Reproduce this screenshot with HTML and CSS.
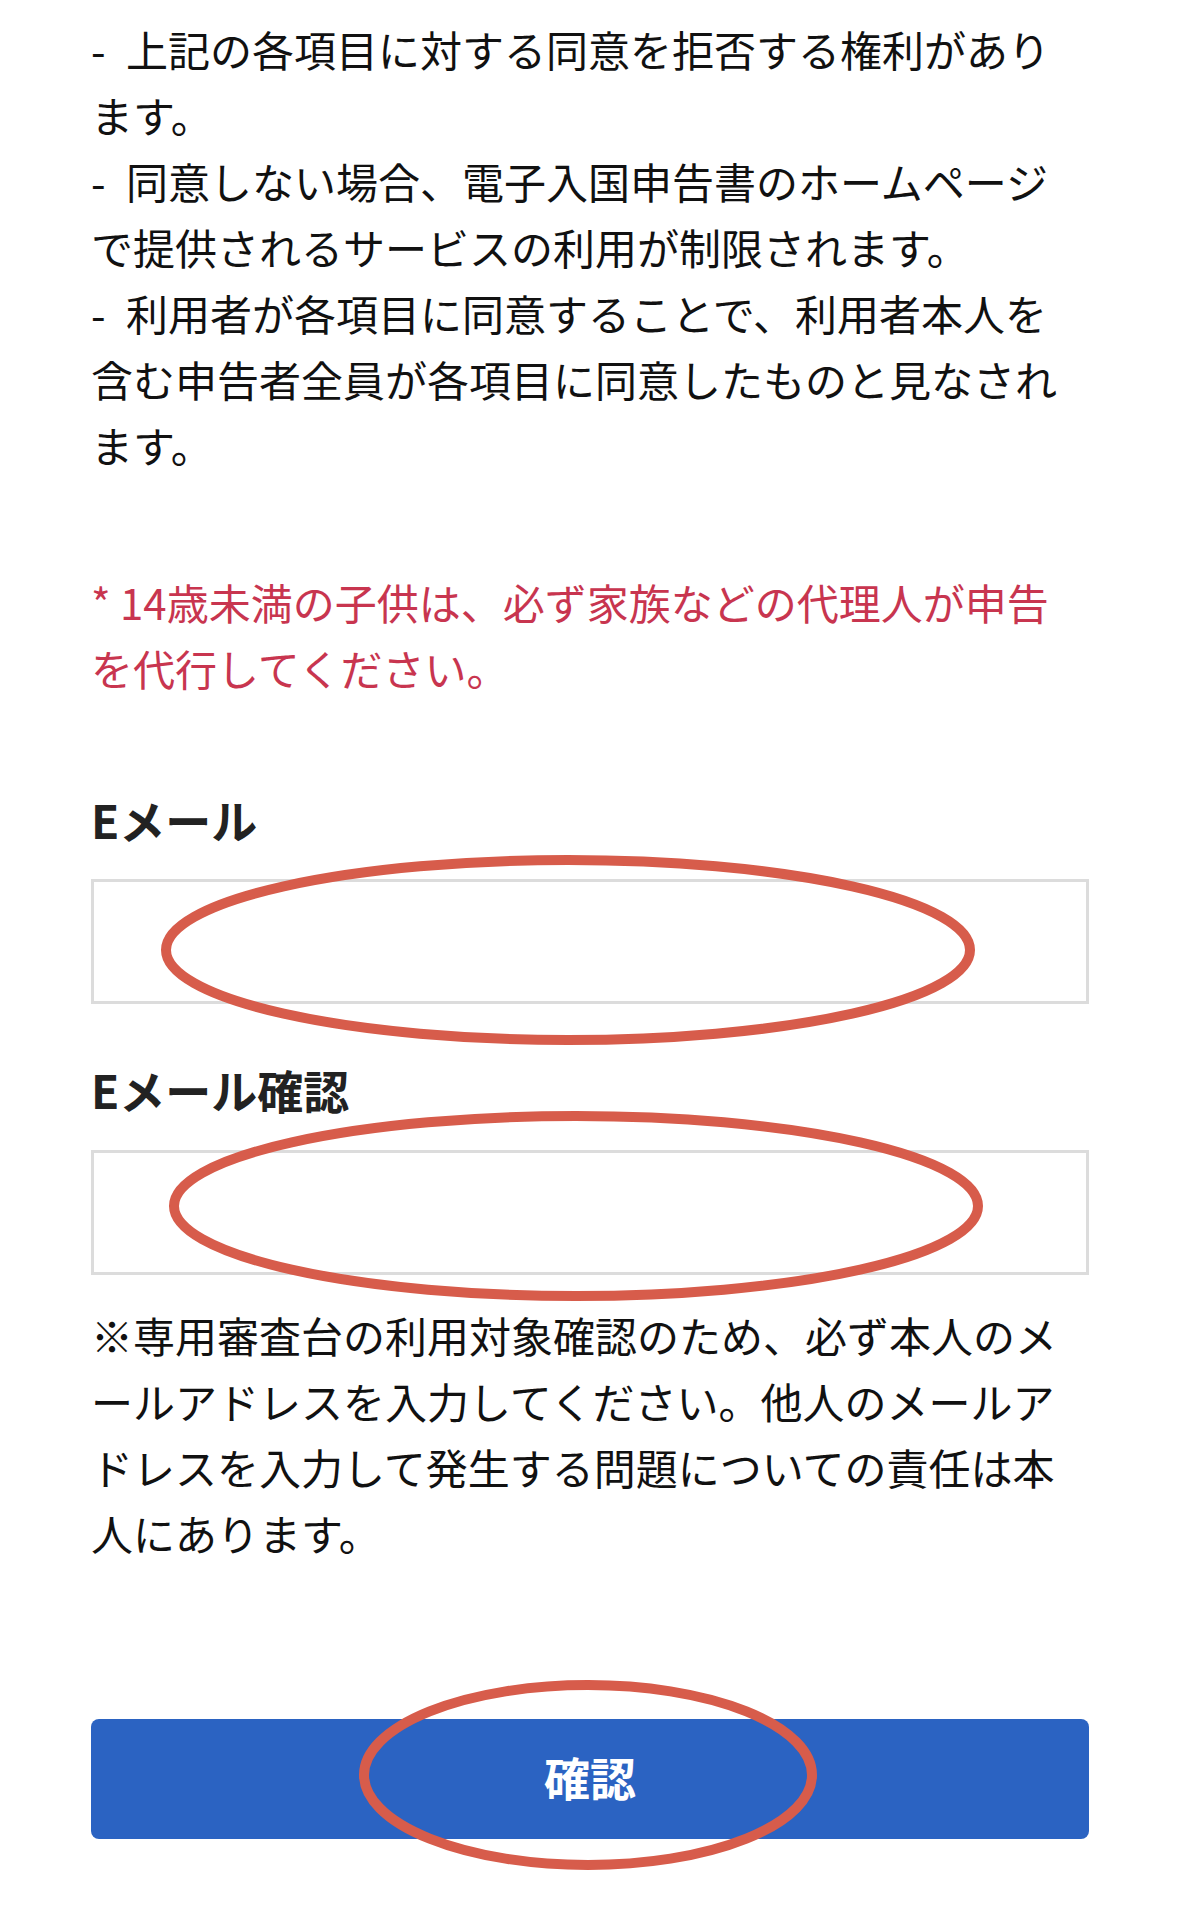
FILE: index.html
```html
<!DOCTYPE html>
<html lang="ja">
<head>
<meta charset="utf-8">
<title>Eメール確認</title>
<link rel="stylesheet" href="styles.css">
</head>
<body>
<main class="page">
  <section class="consent">
    <div class="item">- 上記の各項目に対する同意を拒否する権利があります。</div>
    <div class="item">- 同意しない場合、電子入国申告書のホームページで提供されるサービスの利用が制限されます。</div>
    <div class="item">- 利用者が各項目に同意することで、利用者本人を含む申告者全員が各項目に同意したものと見なされます。</div>
  </section>

  <p class="warn">* 14歳未満の子供は、必ず家族などの代理人が申告を代行してください。</p>

  <form class="form">
    <label class="label label-first" for="email">Eメール</label>
    <input class="field field-first" id="email" type="email">

    <label class="label label-second" for="email2">Eメール確認</label>
    <input class="field field-second" id="email2" type="email">

    <p class="note">※専用審査台の利用対象確認のため、必ず本人のメールアドレスを入力してください。他人のメールアドレスを入力して発生する問題についての責任は本人にあります。</p>

    <button class="submit" type="button">確認</button>
  </form>

  <svg class="marks" width="1179" height="1916" viewBox="0 0 1179 1916" aria-hidden="true">
    <ellipse cx="568" cy="950" rx="402" ry="90"></ellipse>
    <ellipse cx="576" cy="1206" rx="402" ry="90"></ellipse>
    <ellipse cx="588" cy="1775" rx="224" ry="90"></ellipse>
  </svg>
</main>
</body>
</html>
```

FILE: styles.css
```css
html, body {
  margin: 0;
  padding: 0;
  background: #ffffff;
}

body {
  font-family: "Noto Sans CJK JP", "Noto Sans", sans-serif;
  color: #111111;
}

.page {
  position: relative;
  width: 1179px;
  height: 1916px;
  box-sizing: border-box;
  padding: 16px 0 0 91px;
  overflow: hidden;
}

.consent,
.warn,
.note {
  width: 978px;
  font-size: 42px;
  line-height: 66px;
  line-break: loose;
}

.consent {
  margin: 0;
}

.item {
  margin: 0;
  word-spacing: 11px;
}

.warn {
  margin: 91px 0 0;
  color: #c8354f;
}

.form {
  display: flex;
  flex-direction: column;
  width: 998px;
  margin: 0;
}

.label {
  display: block;
  font-size: 46px;
  line-height: 66px;
  font-weight: 700;
  color: #222222;
}

.label-first {
  margin-top: 85px;
}

.label-second {
  margin-top: 52px;
}

.field {
  display: block;
  box-sizing: border-box;
  width: 100%;
  height: 125px;
  margin: 27px 0 0;
  border: 3px solid #dcdcdc;
  border-radius: 0;
  background: #ffffff;
  -webkit-appearance: none;
  appearance: none;
  outline: none;
  font: inherit;
}

.field-second {
  margin-top: 28px;
}

.note {
  margin: 27px 0 0;
  color: #111111;
}

.submit {
  display: block;
  width: 100%;
  height: 120px;
  margin-top: 153px;
  padding: 0 0 6px;
  border: none;
  border-radius: 8px;
  background: #2b63c2;
  color: #ffffff;
  font-family: "Noto Sans CJK JP", "Noto Sans", sans-serif;
  font-size: 46px;
  font-weight: 700;
}

.marks {
  position: absolute;
  top: 0;
  left: 0;
  pointer-events: none;
}

.marks ellipse {
  fill: none;
  stroke: #d75c4b;
  stroke-width: 10;
}
```
